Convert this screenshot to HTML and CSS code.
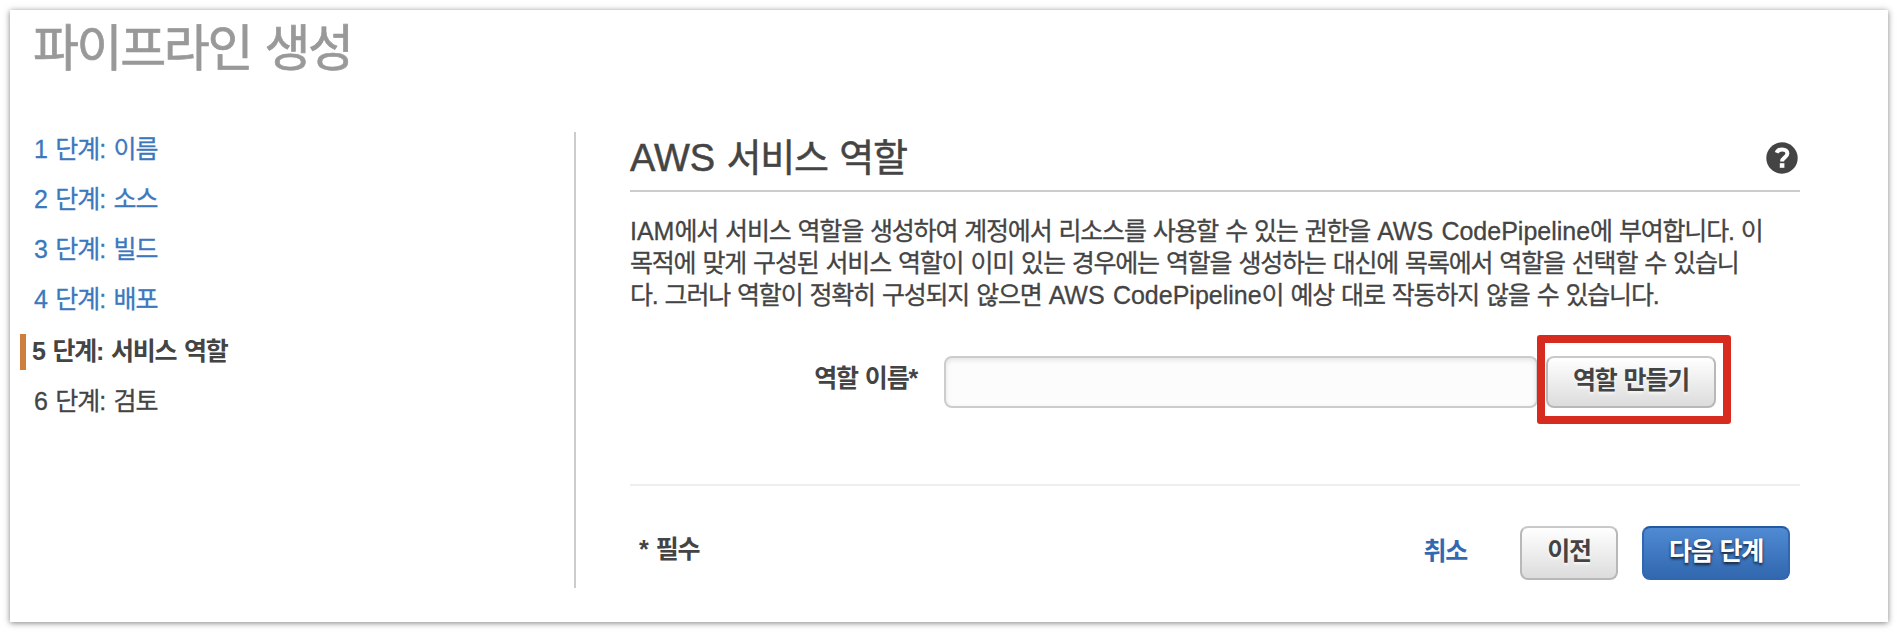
FILE: index.html
```html
<!DOCTYPE html>
<html lang="ko">
<head>
<meta charset="utf-8">
<title>파이프라인 생성</title>
<link rel="stylesheet" href="styles.css">
</head>
<body>
<div class="panel">
  <h1 class="page-title">파이프라인 생성</h1>
  <div class="columns">
    <nav class="steps">
      <a class="step">1 단계: 이름</a>
      <a class="step">2 단계: 소스</a>
      <a class="step">3 단계: 빌드</a>
      <a class="step">4 단계: 배포</a>
      <span class="step step-active">5 단계: 서비스 역할</span>
      <span class="step step-next">6 단계: 검토</span>
    </nav>
    <main class="content">
      <header class="section-head">
        <h2 class="section-title"><span class="latin">AWS</span> 서비스 역할</h2>
        <svg class="help" viewBox="0 0 32 32" width="32" height="32">
          <circle cx="16" cy="16" r="15.7" fill="#444"/>
          <path d="M10.6 10.8C11.6 8.5 13.5 7.4 16.2 7.4c3.2 0 5.2 1.7 5.2 4.2 0 3.6-5.3 3.9-5.3 7.8" fill="none" stroke="#fff" stroke-width="4"/>
          <rect x="13.8" y="21.2" width="4.6" height="4.6" fill="#fff"/>
        </svg>
      </header>
      <p class="intro">
        <span class="line line-1"><span class="latin">IAM</span>에서 서비스 역할을 생성하여 계정에서 리소스를 사용할 수 있는 권한을 <span class="latin">AWS CodePipeline</span>에 부여합니다. 이</span>
        <span class="line line-2">목적에 맞게 구성된 서비스 역할이 이미 있는 경우에는 역할을 생성하는 대신에 목록에서 역할을 선택할 수 있습니</span>
        <span class="line line-3">다. 그러나 역할이 정확히 구성되지 않으면 <span class="latin">AWS CodePipeline</span>이 예상 대로 작동하지 않을 수 있습니다.</span>
      </p>
      <div class="field">
        <label class="field-label" for="role">역할 이름*</label>
        <input class="field-input" id="role" type="text">
        <div class="highlight"><button class="btn btn-create">역할 만들기</button></div>
      </div>
      <footer class="actions">
        <span class="required">* 필수</span>
        <a class="cancel">취소</a>
        <button class="btn btn-prev">이전</button>
        <button class="btn btn-primary">다음 단계</button>
      </footer>
    </main>
  </div>
</div>
</body>
</html>
```
FILE: styles.css
```css
* { box-sizing: border-box; }
body {
  margin: 0;
  padding: 10px;
  height: 632px;
  overflow: hidden;
  background: #fff;
  color: #444;
  font-family: "Liberation Sans", "Noto Sans CJK KR", sans-serif;
  font-size: 25px;
  letter-spacing: -1.2px;
  word-spacing: 1.3px;
}
.panel {
  width: 1878px;
  height: 612px;
  background: #fff;
  box-shadow: 0 1px 6px rgba(0, 0, 0, .5);
}
.page-title {
  margin: 0;
  padding-left: 23px;
  height: 122px;
  line-height: 78px;
  font-size: 50px;
  font-weight: 400;
  letter-spacing: -2.4px;
  word-spacing: 2px;
  color: #999;
  -webkit-text-stroke: .7px #999;
}
.columns { display: flex; height: 456px; }
.steps {
  display: flex;
  flex-direction: column;
  width: 566px;
  padding: 0 0 0 10px;
  border-right: 2px solid #ccc;
}
.step {
  height: 36px;
  margin-bottom: 14px;
  padding-left: 14px;
  line-height: 34px;
  color: #3b78bd;
  white-space: nowrap;
  letter-spacing: -1px;
  word-spacing: 2.4px;
  -webkit-text-stroke: .3px currentColor;
}
.step-active {
  margin-top: 2px;
  padding-left: 6px;
  border-left: 6px solid #cd7f40;
  color: #444;
  font-weight: 700;
  letter-spacing: -1.2px;
  word-spacing: 2px;
  -webkit-text-stroke: 0;
}
.step-next { color: #444; }
.content { width: 1224px; padding-left: 54px; }
.section-head {
  display: flex;
  justify-content: space-between;
  align-items: flex-start;
  height: 60px;
  padding: 10px 2px 0 0;
  border-bottom: 2px solid #ccc;
}
.section-title {
  margin: -9px 0 0;
  height: 50px;
  line-height: 50px;
  font-size: 38px;
  font-weight: 400;
  letter-spacing: -1.2px;
  word-spacing: 2px;
  -webkit-text-stroke: .5px currentColor;
}
.latin { letter-spacing: 0; }
.help { flex: none; }
.intro { margin: 23px 0 0; -webkit-text-stroke: .3px currentColor; }
.line { display: block; height: 32px; line-height: 32px; white-space: nowrap; }
.field { display: flex; height: 173px; }
.field-label {
  width: 287px;
  margin-top: 49px;
  line-height: 36px;
  text-align: right;
  font-weight: 700;
}
.field-input {
  width: 594px;
  height: 52px;
  margin: 45px 0 0 27px;
  border: 2px solid #ccc;
  border-radius: 8px;
  background: #fcfcfc;
  box-shadow: inset 0 2px 5px rgba(0, 0, 0, .1);
}
.highlight {
  width: 194px;
  height: 89px;
  margin: 24px 0 0 -1px;
  padding: 13px 0 0 1px;
  border: 8px solid #d72b20;
  border-radius: 3px;
  flex: none;
}
.btn {
  display: block;
  flex: none;
  height: 54px;
  padding: 0 0 8px;
  border: 2px solid #b8b8b8;
  border-top-color: #c9c9c9;
  border-radius: 8px;
  background: linear-gradient(#fff, #dcdcdc);
  color: #444;
  font: inherit;
  font-weight: 700;
  letter-spacing: inherit;
  word-spacing: inherit;
  text-align: center;
  text-shadow: 0 2px 3px rgba(255, 255, 255, .8);
}
.btn-create { width: 170px; height: 52px; }
.actions {
  display: flex;
  height: 100px;
  padding: 40px 10px 0 9px;
  border-top: 2px solid #eee;
  font-weight: 700;
}
.required { margin-right: auto; line-height: 46px; word-spacing: 2.5px; }
.cancel { margin-right: 53px; line-height: 50px; color: #3369b1; }
.btn-prev { width: 98px; margin-right: 24px; }
.btn-primary {
  width: 148px;
  border-color: #2459a1 #3067b0 #3067b0;
  background: linear-gradient(#4f8ad2, #3168b0);
  color: #fff;
  text-shadow: 0 2px 3px rgba(0, 0, 0, .75);
}
```
